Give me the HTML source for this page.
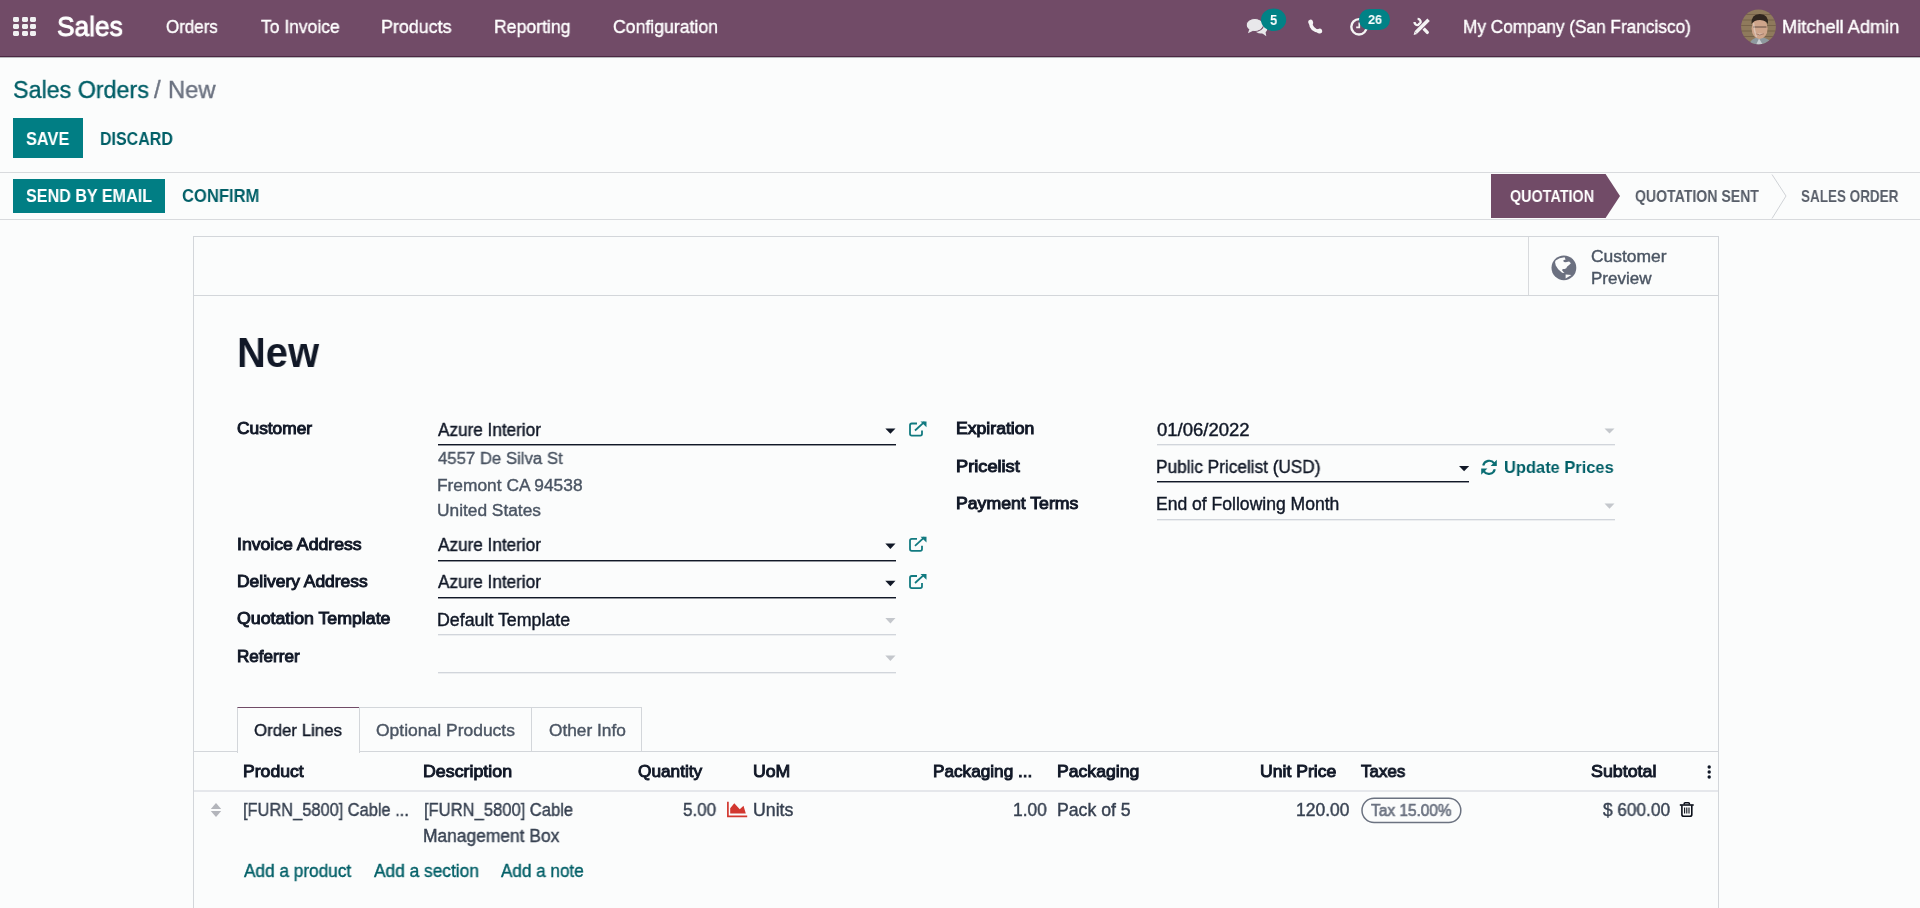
<!DOCTYPE html>
<html>
<head>
<meta charset="utf-8">
<title>Sales Orders / New</title>
<style>
html,body{margin:0;padding:0;}
body{width:1920px;height:908px;overflow:hidden;position:relative;background:#fbfcfc;font-family:"Liberation Sans",sans-serif;}
.t{position:absolute;line-height:0;white-space:pre;transform-origin:0 0;font-family:"Liberation Sans",sans-serif;will-change:transform;}
.r{-webkit-text-stroke:0.4px currentColor;}
.m{-webkit-text-stroke:0.95px currentColor;}
.a{position:absolute;}
.nav{position:absolute;left:0;top:0;width:1920px;height:56px;background:#714b67;border-bottom:1px solid #4b2842;box-shadow:0 1px 0 rgba(60,60,70,.35);}
.hl{position:absolute;height:1px;background:#d8dadd;}
.vl{position:absolute;width:1px;background:#d8dadd;}
svg{position:absolute;overflow:visible;}
</style>
</head>
<body>
<div class="nav"></div>
<!-- app grid icon -->
<div class="a" style="left:13.1px;top:17.3px;width:6.2px;height:5.1px;background:#f0f0f2;border-radius:1.4px"></div>
<div class="a" style="left:21.6px;top:17.3px;width:6.2px;height:5.1px;background:#f0f0f2;border-radius:1.4px"></div>
<div class="a" style="left:30.0px;top:17.3px;width:6.2px;height:5.1px;background:#f0f0f2;border-radius:1.4px"></div>
<div class="a" style="left:13.1px;top:24.0px;width:6.2px;height:5.1px;background:#f0f0f2;border-radius:1.4px"></div>
<div class="a" style="left:21.6px;top:24.0px;width:6.2px;height:5.1px;background:#f0f0f2;border-radius:1.4px"></div>
<div class="a" style="left:30.0px;top:24.0px;width:6.2px;height:5.1px;background:#f0f0f2;border-radius:1.4px"></div>
<div class="a" style="left:13.1px;top:30.6px;width:6.2px;height:5.1px;background:#f0f0f2;border-radius:1.4px"></div>
<div class="a" style="left:21.6px;top:30.6px;width:6.2px;height:5.1px;background:#f0f0f2;border-radius:1.4px"></div>
<div class="a" style="left:30.0px;top:30.6px;width:6.2px;height:5.1px;background:#f0f0f2;border-radius:1.4px"></div>

<!-- systray icons -->
<svg style="left:0;top:0" width="1920" height="56" viewBox="0 0 1920 56">
  <ellipse cx="1261" cy="29" rx="6.3" ry="4.6" fill="#e8e8ea"/>
  <path d="M1259 31 L1266.3 36.2 L1265.2 30.5 Z" fill="#e8e8ea"/>
  <ellipse cx="1254.8" cy="25" rx="8.6" ry="6.4" fill="#e8e8ea" stroke="#714b67" stroke-width="1.1"/>
  <ellipse cx="1254.8" cy="25" rx="8" ry="5.9" fill="#e8e8ea"/>
  <path d="M1249.3 29.3 L1248 33.3 L1253.6 30.6 Z" fill="#e8e8ea"/>
  <!-- badge 5 -->
  <ellipse cx="1273.6" cy="19.8" rx="12.6" ry="11.3" fill="#018286"/>
  <!-- phone -->
  <path d="M1310.6 22.5 Q1311 30.5 1319.6 31.2" fill="none" stroke="#f4f4f4" stroke-width="3.5" stroke-linecap="round"/>
  <ellipse cx="1310.7" cy="22.3" rx="2.4" ry="2.7" transform="rotate(-15 1310.7 22.3)" fill="#f4f4f4"/>
  <ellipse cx="1319.5" cy="31.1" rx="2.7" ry="2.4" transform="rotate(-15 1319.5 31.1)" fill="#f4f4f4"/>
  <!-- clock -->
  <circle cx="1359" cy="26.8" r="7.7" fill="none" stroke="#f4f4f4" stroke-width="2.4"/>
  <path d="M1359.3 22.5 V27.4 H1356.2" fill="none" stroke="#f4f4f4" stroke-width="1.7"/>
  <rect x="1359" y="9" width="31" height="21" rx="10.5" fill="#018286"/>
  <!-- tools -->
  <path d="M1419.4 24.2 L1427.3 32.4" stroke="#f4f4f4" stroke-width="3.3" stroke-linecap="round"/>
  <path d="M1417.6 18.9 A3.1 3.1 0 1 1 1414.5 22" fill="none" stroke="#f4f4f4" stroke-width="2.3"/>
  <path d="M1415.8 32.6 L1428.6 19.8" stroke="#714b67" stroke-width="5.2" stroke-linecap="butt"/>
  <path d="M1415.8 32.6 L1428.6 19.8" stroke="#f4f4f4" stroke-width="3.5" stroke-linecap="butt"/>
  <path d="M1414.5 31.4 L1413.6 35 L1417.1 34 Z" fill="#f4f4f4"/>
</svg>
<!-- avatar -->
<svg style="left:1741px;top:9px" width="35" height="36" viewBox="0 0 35 36">
  <defs><clipPath id="av"><circle cx="17.5" cy="17.8" r="17.4"/></clipPath></defs>
  <g clip-path="url(#av)">
    <rect width="35" height="36" fill="#8f7a5c"/>
    <path d="M0 5.5 H35 M0 11 H35 M0 16.5 H35 M0 22 H35 M0 27.5 H35 M0 33 H35" stroke="#6e5b43" stroke-width="1.1" opacity=".7"/>
    <path d="M8 36 Q10 28 19 28.5 Q28 28 32 36 Z" fill="#8e989f"/>
    <path d="M15 36 L18 29.5 L22 36 Z" fill="#c9ced2"/>
    <ellipse cx="18.6" cy="19.5" rx="8" ry="10.5" fill="#cfa58b"/>
    <path d="M10.5 15 Q10 5.2 18.8 5 Q28 5 27 15.5 Q26 11.5 19 11 Q13 11.2 10.5 15 Z" fill="#30261f"/>
    <path d="M12 18 H25.5" stroke="#55443a" stroke-width="0.9"/>
    <path d="M14.8 24.8 Q18.8 27 22.8 24.8" fill="#efe2da" stroke="#8a5a48" stroke-width="0.7"/>
    <path d="M12.5 14 Q13 22 15.5 28" stroke="#eadfd9" stroke-width="1.5" fill="none" opacity=".5"/>
  </g>
</svg>

<!-- control panel -->
<div class="a" style="left:13px;top:118px;width:70px;height:40px;background:#017e84;"></div>
<div class="hl" style="left:0;top:172px;width:1920px;"></div>
<div class="a" style="left:13px;top:179px;width:152px;height:34px;background:#017e84;"></div>
<div class="hl" style="left:0;top:219px;width:1920px;"></div>
<!-- statusbar -->
<svg style="left:1491px;top:174px" width="130" height="44" viewBox="0 0 130 44">
  <path d="M0 0 H114.6 L129 22 L114.6 44 H0 Z" fill="#714b67"/>
</svg>
<svg style="left:1771px;top:174px" width="17" height="45" viewBox="0 0 17 45">
  <path d="M1 0.5 L15 22 L1 44.5" fill="none" stroke="#cfd2d6" stroke-width="1"/>
</svg>

<!-- sheet -->
<div class="a" style="left:193px;top:236px;width:1524px;height:700px;border:1px solid #d3d6da;background:#fbfcfc;"></div>
<div class="hl" style="left:194px;top:295px;width:1524px;background:#d3d6da"></div>
<div class="vl" style="left:1528px;top:237px;height:58px;background:#d8dadd"></div>
<!-- globe -->
<svg style="left:1548px;top:252px" width="32" height="32" viewBox="0 0 32 32">
  <circle cx="15.9" cy="15.8" r="12.4" fill="#6b7080"/>
  <path d="M7.05 10.2 L7.6 8.5 L11.6 6.2 L16.6 5.2 L17.6 7.4 L15.3 8.2 L15.8 9.9 L17.8 10.2 L21.1 9.5 L22.9 11.3 L21.1 13 L19 14.8 L18.3 16.2 L16.6 16.9 L14.8 17.4 L14.4 18.2 L15.2 19.7 L16.6 21.1 L14.1 20.8 L10.2 17.3 L7.75 13.4 Z" fill="#fbfcfc"/>
  <circle cx="15.4" cy="18.1" r="1.1" fill="#6b7080"/>
  <path d="M17.6 22.6 L23.4 22.9 L17.6 26.4 Z" fill="#fbfcfc"/>
</svg>

<!-- form fields: underlines -->
<div class="a" style="left:438px;top:444px;width:458px;height:1px;background:#111827;box-shadow:0 1px 0 rgba(17,24,39,.45)"></div>
<div class="a" style="left:438px;top:560px;width:458px;height:1px;background:#111827;box-shadow:0 1px 0 rgba(17,24,39,.45)"></div>
<div class="a" style="left:438px;top:597px;width:458px;height:1px;background:#111827;box-shadow:0 1px 0 rgba(17,24,39,.45)"></div>
<div class="a" style="left:438px;top:634px;width:458px;height:1px;background:#d1d5db;box-shadow:0 1px 0 rgba(209,213,219,.35)"></div>
<div class="a" style="left:438px;top:672px;width:458px;height:1px;background:#d1d5db;box-shadow:0 1px 0 rgba(209,213,219,.35)"></div>
<div class="a" style="left:1157px;top:444px;width:458px;height:1px;background:#d1d5db;box-shadow:0 1px 0 rgba(209,213,219,.35)"></div>
<div class="a" style="left:1157px;top:481px;width:312px;height:1px;background:#111827;box-shadow:0 1px 0 rgba(17,24,39,.45)"></div>
<div class="a" style="left:1157px;top:519px;width:458px;height:1px;background:#d1d5db;box-shadow:0 1px 0 rgba(209,213,219,.35)"></div>
<!-- carets -->
<svg style="left:0;top:0" width="1920" height="908" viewBox="0 0 1920 908">
  <path d="M885.3 428.4 H895.5 L890.4 433.8 Z" fill="#111827"/>
  <path d="M885.3 543.6 H895.5 L890.4 549 Z" fill="#111827"/>
  <path d="M885.3 580.8 H895.5 L890.4 586.2 Z" fill="#111827"/>
  <path d="M885.3 618 H895.5 L890.4 623.4 Z" fill="#c4c7cc"/>
  <path d="M885.3 655.6 H895.5 L890.4 661 Z" fill="#c4c7cc"/>
  <path d="M1604.5 428.4 H1614.5 L1609.5 433.6 Z" fill="#c4c7cc"/>
  <path d="M1459 466 H1469.2 L1464.1 471.2 Z" fill="#111827"/>
  <path d="M1604.5 503.5 H1614.5 L1609.5 508.7 Z" fill="#c4c7cc"/>
  <!-- external link icons -->
  <g id="ext" fill="none" stroke="#127a80" stroke-width="1.8">
    <path d="M917 423.5 H911.8 Q910 423.5 910 425.3 V433.8 Q910 435.6 911.8 435.6 H920.3 Q922 435.6 922 433.8 V430.5"/>
    <path d="M915 430.5 L924.5 421.8"/>
  </g>
  <path d="M920.5 421.5 H926.5 V427.3 Z" fill="#127a80"/>
  <g fill="none" stroke="#127a80" stroke-width="1.8">
    <path d="M917 538.8 H911.8 Q910 538.8 910 540.6 V549.1 Q910 550.9 911.8 550.9 H920.3 Q922 550.9 922 549.1 V545.8"/>
    <path d="M915 545.8 L924.5 537.1"/>
    <path d="M917 576 H911.8 Q910 576 910 577.8 V586.3 Q910 588.1 911.8 588.1 H920.3 Q922 588.1 922 586.3 V583"/>
    <path d="M915 583 L924.5 574.3"/>
  </g>
  <path d="M920.5 536.8 H926.5 V542.6 Z M920.5 574 H926.5 V579.8 Z" fill="#127a80"/>
  <!-- refresh icon -->
  <g fill="none" stroke="#0c6e74" stroke-width="2.2">
    <path d="M1483.2 465.5 A6.2 6.2 0 0 1 1494.2 463.3"/>
    <path d="M1494.8 469.2 A6.2 6.2 0 0 1 1483.8 471.4"/>
  </g>
  <path d="M1496.8 459.8 V466 H1490.6 Z M1481.2 474.8 V468.6 H1487.4 Z" fill="#0c6e74"/>
</svg>

<!-- tabs -->
<div class="hl" style="left:194px;top:751px;width:1524px;background:#d3d6da"></div>
<div class="a" style="left:237px;top:707px;width:121px;height:45px;border:1px solid #d3d6da;border-top:1px solid #714b67;border-bottom:none;background:#fbfcfc"></div>
<div class="a" style="left:359px;top:707px;width:172px;height:43px;border:1px solid #d3d6da;border-left:none;"></div>
<div class="a" style="left:531px;top:707px;width:110px;height:43px;border:1px solid #d3d6da;border-left:none;"></div>

<!-- table -->
<div class="a" style="left:194px;top:790px;width:1524px;height:2px;background:#e5e7eb"></div>
<svg style="left:0;top:0" width="1920" height="908" viewBox="0 0 1920 908">
  <!-- kebab -->
  <circle cx="1709.2" cy="767" r="1.7" fill="#111827"/>
  <circle cx="1709.2" cy="772" r="1.7" fill="#111827"/>
  <circle cx="1709.2" cy="777" r="1.7" fill="#111827"/>
  <!-- handle -->
  <path d="M210.8 809 L216 803 L221.2 809 Z" fill="#b3b5bb"/>
  <path d="M210.8 811 L216 817 L221.2 811 Z" fill="#b3b5bb"/>
  <!-- area chart -->
  <path d="M727.9 801.7 V816.4 H747.2" fill="none" stroke="#d2372f" stroke-width="1.7"/>
  <path d="M730.2 813.6 V808.3 L734.3 803.3 L739.75 809.2 L743.5 805.7 L745.8 813.6 Z" fill="#d2372f"/>
  <!-- tax pill -->
  <rect x="1362" y="798.3" width="98.8" height="24.2" rx="12.1" fill="none" stroke="#6b7280" stroke-width="1.5"/>
  <!-- trash -->
  <g fill="none" stroke="#0b0f19" stroke-width="1.6">
    <path d="M1679.8 805 H1693.7"/>
    <path d="M1684.2 804.6 V803.7 Q1684.2 802.7 1685.2 802.7 H1688.4 Q1689.4 802.7 1689.4 803.7 V804.6"/>
    <path d="M1681.9 805.2 V814.4 Q1681.9 816.3 1683.8 816.3 H1689.9 Q1691.8 816.3 1691.8 814.4 V805.2"/>
  </g>
  <path d="M1684.6 807.6 V813.5 M1686.8 807.6 V813.5 M1689 807.6 V813.5" stroke="#0b0f19" stroke-width="1.1"/>
</svg>

<span class="t m" style="left:57.16px;top:26px;font-size:28.25px;font-weight:400;color:#ffffff;transform:scaleX(0.9310);">Sales</span>
<span class="t r" style="left:165.85px;top:27px;font-size:18.5px;font-weight:400;color:#ffffff;transform:scaleX(0.9155);">Orders</span>
<span class="t r" style="left:260.85px;top:27px;font-size:18.5px;font-weight:400;color:#ffffff;transform:scaleX(0.9447);">To Invoice</span>
<span class="t r" style="left:381.27px;top:27px;font-size:18.5px;font-weight:400;color:#ffffff;transform:scaleX(0.9668);">Products</span>
<span class="t r" style="left:493.99px;top:27px;font-size:18.5px;font-weight:400;color:#ffffff;transform:scaleX(0.9521);">Reporting</span>
<span class="t r" style="left:612.82px;top:27px;font-size:18.5px;font-weight:400;color:#ffffff;transform:scaleX(0.9541);">Configuration</span>
<span class="t r" style="left:1462.57px;top:27px;font-size:18.5px;font-weight:400;color:#ffffff;transform:scaleX(0.9313);">My Company (San Francisco)</span>
<span class="t r" style="left:1781.74px;top:27px;font-size:18.5px;font-weight:400;color:#ffffff;transform:scaleX(0.9833);">Mitchell Admin</span>
<span class="t" style="left:1270.11px;top:20px;font-size:14.25px;font-weight:700;color:#ffffff;transform:scaleX(0.9123);">5</span>
<span class="t" style="left:1367.52px;top:20px;font-size:13.25px;font-weight:700;color:#ffffff;transform:scaleX(0.9579);">26</span>
<span class="t r" style="left:12.74px;top:90px;font-size:24.25px;font-weight:400;color:#015f67;transform:scaleX(0.9603);">Sales Orders</span>
<span class="t r" style="left:154.20px;top:90px;font-size:24.25px;font-weight:400;color:#6b7280;transform:scaleX(0.9720);">/</span>
<span class="t r" style="left:168.30px;top:90px;font-size:24.25px;font-weight:400;color:#6b7280;transform:scaleX(0.9794);">New</span>
<span class="t" style="left:26.31px;top:139px;font-size:18.5px;font-weight:700;color:#ffffff;transform:scaleX(0.8841);">SAVE</span>
<span class="t" style="left:99.68px;top:139px;font-size:18.5px;font-weight:700;color:#015f67;transform:scaleX(0.8644);">DISCARD</span>
<span class="t" style="left:26.32px;top:196px;font-size:17.75px;font-weight:700;color:#ffffff;transform:scaleX(0.9082);">SEND BY EMAIL</span>
<span class="t" style="left:182.24px;top:196px;font-size:17.75px;font-weight:700;color:#015f67;transform:scaleX(0.9340);">CONFIRM</span>
<span class="t" style="left:1510.43px;top:196px;font-size:16.5px;font-weight:700;color:#ffffff;transform:scaleX(0.8700);">QUOTATION</span>
<span class="t" style="left:1635.24px;top:196px;font-size:16.5px;font-weight:700;color:#575d68;transform:scaleX(0.8533);">QUOTATION SENT</span>
<span class="t" style="left:1801.10px;top:196px;font-size:16.5px;font-weight:700;color:#575d68;transform:scaleX(0.8174);">SALES ORDER</span>
<span class="t r" style="left:1591.13px;top:257px;font-size:17.0px;font-weight:400;color:#4b5563;transform:scaleX(1.0263);">Customer</span>
<span class="t r" style="left:1590.64px;top:279px;font-size:17.0px;font-weight:400;color:#4b5563;transform:scaleX(1.0007);">Preview</span>
<span class="t" style="left:236.91px;top:352px;font-size:42.75px;font-weight:700;color:#111827;transform:scaleX(0.9333);">New</span>
<span class="t m" style="left:237.31px;top:429px;font-size:16.0px;font-weight:400;color:#111827;transform:scaleX(1.0824);">Customer</span>
<span class="t m" style="left:236.59px;top:545px;font-size:16.0px;font-weight:400;color:#111827;transform:scaleX(1.1034);">Invoice Address</span>
<span class="t m" style="left:236.78px;top:582px;font-size:16.0px;font-weight:400;color:#111827;transform:scaleX(1.0889);">Delivery Address</span>
<span class="t m" style="left:237.29px;top:619px;font-size:16.0px;font-weight:400;color:#111827;transform:scaleX(1.1080);">Quotation Template</span>
<span class="t m" style="left:236.81px;top:657px;font-size:16.0px;font-weight:400;color:#111827;transform:scaleX(1.0671);">Referrer</span>
<span class="t r" style="left:438.40px;top:430px;font-size:17.5px;font-weight:400;color:#111827;transform:scaleX(0.9797);">Azure Interior</span>
<span class="t r" style="left:438.07px;top:458px;font-size:17.25px;font-weight:400;color:#4b5563;transform:scaleX(0.9704);">4557 De Silva St</span>
<span class="t r" style="left:437.01px;top:485px;font-size:17.25px;font-weight:400;color:#4b5563;transform:scaleX(1.0052);">Fremont CA 94538</span>
<span class="t r" style="left:437.01px;top:510px;font-size:17.25px;font-weight:400;color:#4b5563;transform:scaleX(1.0039);">United States</span>
<span class="t r" style="left:438.40px;top:545px;font-size:17.5px;font-weight:400;color:#111827;transform:scaleX(0.9797);">Azure Interior</span>
<span class="t r" style="left:438.40px;top:582px;font-size:17.5px;font-weight:400;color:#111827;transform:scaleX(0.9797);">Azure Interior</span>
<span class="t r" style="left:436.98px;top:620px;font-size:17.5px;font-weight:400;color:#111827;transform:scaleX(1.0163);">Default Template</span>
<span class="t m" style="left:955.67px;top:429px;font-size:16.0px;font-weight:400;color:#111827;transform:scaleX(1.1010);">Expiration</span>
<span class="t m" style="left:955.62px;top:467px;font-size:16.0px;font-weight:400;color:#111827;transform:scaleX(1.1391);">Pricelist</span>
<span class="t m" style="left:955.66px;top:504px;font-size:16.0px;font-weight:400;color:#111827;transform:scaleX(1.1036);">Payment Terms</span>
<span class="t r" style="left:1156.76px;top:430px;font-size:17.5px;font-weight:400;color:#111827;transform:scaleX(1.0579);">01/06/2022</span>
<span class="t r" style="left:1156.12px;top:467px;font-size:17.5px;font-weight:400;color:#111827;transform:scaleX(0.9833);">Public Pricelist (USD)</span>
<span class="t r" style="left:1156.10px;top:504px;font-size:17.5px;font-weight:400;color:#111827;transform:scaleX(1.0026);">End of Following Month</span>
<span class="t" style="left:1504.01px;top:467px;font-size:17.25px;font-weight:700;color:#015f67;transform:scaleX(0.9538);">Update Prices</span>
<span class="t r" style="left:254.46px;top:730px;font-size:17.25px;font-weight:400;color:#111827;transform:scaleX(0.9756);">Order Lines</span>
<span class="t r" style="left:375.93px;top:730px;font-size:17.25px;font-weight:400;color:#4b5563;transform:scaleX(1.0134);">Optional Products</span>
<span class="t r" style="left:548.74px;top:730px;font-size:17.25px;font-weight:400;color:#4b5563;transform:scaleX(1.0022);">Other Info</span>
<span class="t m" style="left:242.87px;top:772px;font-size:17.0px;font-weight:400;color:#111827;transform:scaleX(1.0355);">Product</span>
<span class="t m" style="left:422.95px;top:772px;font-size:17.0px;font-weight:400;color:#111827;transform:scaleX(1.0476);">Description</span>
<span class="t m" style="left:638.11px;top:772px;font-size:17.0px;font-weight:400;color:#111827;transform:scaleX(1.0138);">Quantity</span>
<span class="t m" style="left:752.81px;top:772px;font-size:17.0px;font-weight:400;color:#111827;transform:scaleX(1.0407);">UoM</span>
<span class="t m" style="left:933.30px;top:772px;font-size:17.0px;font-weight:400;color:#111827;transform:scaleX(1.0103);">Packaging ...</span>
<span class="t m" style="left:1056.56px;top:772px;font-size:17.0px;font-weight:400;color:#111827;transform:scaleX(1.0369);">Packaging</span>
<span class="t m" style="left:1260.32px;top:772px;font-size:17.0px;font-weight:400;color:#111827;transform:scaleX(1.0347);">Unit Price</span>
<span class="t m" style="left:1361.39px;top:772px;font-size:17.0px;font-weight:400;color:#111827;transform:scaleX(0.9949);">Taxes</span>
<span class="t m" style="left:1590.83px;top:772px;font-size:17.0px;font-weight:400;color:#111827;transform:scaleX(1.0489);">Subtotal</span>
<span class="t r" style="left:243.15px;top:810px;font-size:17.5px;font-weight:400;color:#374151;transform:scaleX(0.9367);">[FURN_5800] Cable ...</span>
<span class="t r" style="left:423.54px;top:810px;font-size:17.5px;font-weight:400;color:#374151;transform:scaleX(0.9462);">[FURN_5800] Cable</span>
<span class="t r" style="left:423.31px;top:836px;font-size:17.5px;font-weight:400;color:#374151;transform:scaleX(0.9937);">Management Box</span>
<span class="t r" style="left:682.82px;top:810px;font-size:17.5px;font-weight:400;color:#374151;transform:scaleX(0.9748);">5.00</span>
<span class="t r" style="left:753.38px;top:810px;font-size:17.5px;font-weight:400;color:#374151;transform:scaleX(1.0132);">Units</span>
<span class="t r" style="left:1012.56px;top:810px;font-size:17.5px;font-weight:400;color:#374151;transform:scaleX(0.9945);">1.00</span>
<span class="t r" style="left:1056.79px;top:810px;font-size:17.5px;font-weight:400;color:#374151;transform:scaleX(1.0102);">Pack of 5</span>
<span class="t r" style="left:1296.30px;top:810px;font-size:17.5px;font-weight:400;color:#374151;transform:scaleX(0.9981);">120.00</span>
<span class="t m" style="left:1371.17px;top:811px;font-size:15.75px;font-weight:400;color:#6b7280;transform:scaleX(0.9794);-webkit-text-stroke:0.65px currentColor;">Tax 15.00%</span>
<span class="t r" style="left:1603.03px;top:810px;font-size:17.5px;font-weight:400;color:#374151;transform:scaleX(0.9836);">$ 600.00</span>
<span class="t r" style="left:243.70px;top:871px;font-size:17.75px;font-weight:400;color:#015f67;transform:scaleX(0.9701);">Add a product</span>
<span class="t r" style="left:374.10px;top:871px;font-size:17.75px;font-weight:400;color:#015f67;transform:scaleX(0.9753);">Add a section</span>
<span class="t r" style="left:501.00px;top:871px;font-size:17.75px;font-weight:400;color:#015f67;transform:scaleX(0.9633);">Add a note</span>
</body>
</html>
